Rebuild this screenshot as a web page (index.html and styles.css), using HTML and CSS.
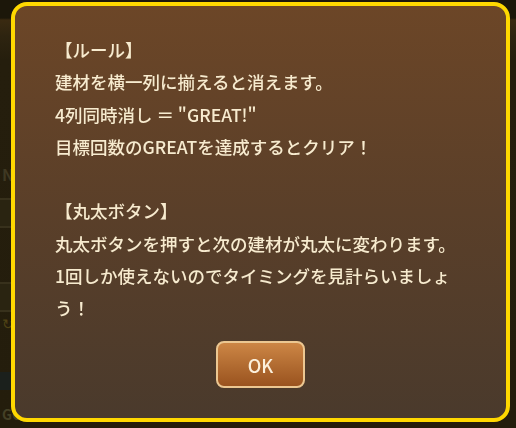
FILE: index.html
```html
<!DOCTYPE html>
<html lang="ja">
<head>
<meta charset="utf-8">
<title>ルール</title>
<link rel="stylesheet" href="styles.css">
</head>
<body>
<div class="game">
  <div class="topbar"></div>
  <div class="side">
    <div class="label">N</div>
    <div class="slot"></div>
    <div class="slot slot2"></div>
    <div class="spin">↻</div>
    <div class="band"></div>
    <div class="goal">GOAL</div>
  </div>
</div>
<div class="overlay">
  <div class="modal">
    <p class="rules">【ルール】<br>建材を横一列に揃えると消えます。<br>4列同時消し ＝ "GREAT!"<br>目標回数のGREATを達成するとクリア！<br><br>【丸太ボタン】<br>丸太ボタンを押すと次の建材が丸太に変わります。<br>1回しか使えないのでタイミングを見計らいましょう！</p>
    <div class="actions"><button class="ok">OK</button></div>
  </div>
</div>
</body>
</html>
```
FILE: styles.css
```css
html, body {
  margin: 0;
  padding: 0;
}
body {
  width: 516px;
  height: 428px;
  overflow: hidden;
  background: #221c0d;
  font-family: "Noto Sans CJK JP", "Noto Sans", sans-serif;
}
.game {
  height: 428px;
  background: linear-gradient(180deg, #1c170a 0, #1c170a 18px, #3a2a11 20px, #2e2410 36px, #251e0d 60px, #241d0c 100%);
}
.topbar {
  height: 150px;
}
.side {
  width: 60px;
  display: flex;
  flex-direction: column;
}
.label {
  color: #3f3822;
  font-weight: 700;
  font-size: 16px;
  height: 24px;
  line-height: 24px;
  margin-left: 2px;
  margin-top: 12px;
}
.slot {
  width: 28px;
  height: 26px;
  margin-left: -10px;
  margin-top: 12px;
  border: 2px solid #38311c;
  border-radius: 6px;
  background: #2a2411;
}
.slot2 {
  margin-top: 54px;
}
.spin {
  color: #4f4214;
  font-size: 14px;
  margin-left: 2px;
  height: 22px;
  line-height: 22px;
}
.band {
  height: 18px;
  margin-top: 38px;
  background: #1b201c;
}
.goal {
  color: #444026;
  font-weight: 700;
  font-size: 14px;
  margin-top: 14px;
  margin-left: 2px;
}
.overlay {
  position: fixed;
  inset: 0;
  display: flex;
  align-items: flex-start;
  padding: 2px 0 0 11px;
}
.modal {
  box-sizing: border-box;
  width: 499px;
  height: 420px;
  border: 4px solid #ffd800;
  border-radius: 16px;
  background: linear-gradient(180deg, #6c4627 0%, #5a3f29 50%, #4a3a2c 100%);
  padding: 28px 40px 30px 40px;
  display: flex;
  flex-direction: column;
}
.rules {
  margin: 0;
  color: #f7ebcf;
  font-size: 17.5px;
  font-weight: 500;
  line-height: 32.3px;
}
.actions {
  margin-top: auto;
  display: flex;
  justify-content: center;
}
.ok {
  box-sizing: border-box;
  width: 89px;
  height: 47px;
  border: 2px solid #ecc791;
  border-radius: 8px;
  background: linear-gradient(180deg, #cd8645 0%, #b06a30 55%, #9a531f 100%);
  color: #fbf0dc;
  font-family: "Noto Sans CJK JP", "Noto Sans", sans-serif;
  font-size: 18px;
  font-weight: 500;
  padding: 0;
}
```
